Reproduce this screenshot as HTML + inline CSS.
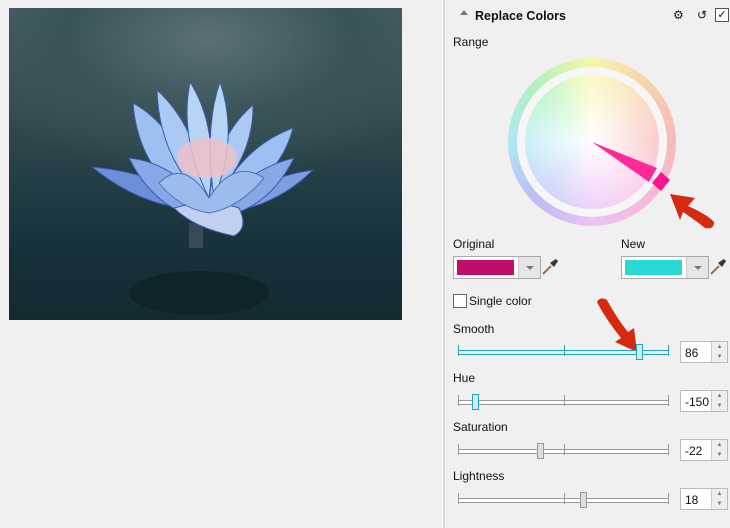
<!DOCTYPE html><html><head><style>
body{margin:0;width:730px;height:528px;background:#f0f0f0;font-family:"Liberation Sans",sans-serif;font-size:12px;color:#111;position:relative;overflow:hidden}
.a{position:absolute}
.img{left:9px;top:8px;width:393px;height:312px;background:radial-gradient(ellipse 260px 140px at 200px 30px,#5a7076 0%,#3a5359 55%,transparent 100%),linear-gradient(#4a6268 0%,#2a444a 45%,#17323a 75%,#132a30 100%)}
.div{left:442px;top:0;width:2px;height:528px;background:#d8d8d8;border-left:1px solid #fff}
.track{height:3px;border-top:1px solid #999;border-bottom:1px solid #999;background:#fff}
.tick{width:1px;height:11px;background:#999;top:-5px}
.thumb{width:5px;height:14px;border:1px solid #999;background:#ddd;top:-6px}
.spin{left:680px;width:48px;height:22px;background:#fff;border:1px solid #bbb;box-sizing:border-box}
.spin span{position:absolute;left:4px;top:4px}
.spin i{position:absolute;right:0;top:0;width:15px;height:20px;background:#eee;border-left:1px solid #ccc;font-style:normal;font-size:6px;color:#777;text-align:center;line-height:10px}
.sw{width:88px;height:23px;border:1px solid #aaa;background:#fff;box-sizing:border-box}
.sw b{position:absolute;left:3px;top:3px;width:57px;height:15px}
.sw i{position:absolute;right:0;top:0;width:21px;height:21px;background:#e6e6e6;border-left:1px solid #ccc}
.sw i:after{content:"";position:absolute;left:7px;top:9px;border:4px solid transparent;border-top:4px solid #777}
</style></head><body>
<div class="a img">
<svg width="393" height="312" style="position:absolute;left:0;top:0">
<ellipse cx="190" cy="285" rx="70" ry="22" fill="#0c1e22" opacity=".6"/>
<rect x="180" y="215" width="14" height="25" fill="#3a4858"/>
<g stroke="#3a5ab0" stroke-width="1">
<path d="M83 159 Q150 165 200 200 Q140 205 83 159Z" fill="#6d8fd8"/>
<path d="M304 162 Q250 170 200 205 Q260 205 304 162Z" fill="#7c9ee0"/>
<path d="M124 95 Q170 120 195 200 Q130 170 124 95Z" fill="#9ec0f0"/>
<path d="M284 120 Q230 140 205 200 Q270 175 284 120Z" fill="#9ec0f0"/>
<path d="M148 82 Q190 120 198 195 Q150 150 148 82Z" fill="#aacaf4"/>
<path d="M244 97 Q205 130 200 195 Q245 150 244 97Z" fill="#aacaf4"/>
<path d="M181 74 Q210 120 200 190 Q170 130 181 74Z" fill="#b6d4f6"/>
<path d="M211 74 Q230 130 205 190 Q195 120 211 74Z" fill="#b6d4f6"/>
<path d="M120 150 Q170 155 205 210 Q150 210 120 150Z" fill="#86a8e6"/>
<path d="M285 150 Q240 160 195 210 Q255 210 285 150Z" fill="#86a8e6"/>
<path d="M165 200 Q200 190 230 200 Q240 220 225 228 Q185 220 165 200Z" fill="#c0d0ee"/>
</g>
<ellipse cx="198" cy="150" rx="30" ry="20" fill="#efc0c8" opacity=".85"/>
<path d="M150 175 Q175 150 200 190 Q225 150 255 170 Q230 200 200 205 Q170 200 150 175Z" fill="#9cbcee" stroke="#5070c0"/>
</svg></div>
<div class="a div"></div>
<div class="a" style="left:460px;top:10px;border:4px solid transparent;border-bottom:5px solid #777;border-top:0"></div>
<div class="a" style="left:475px;top:9px;font-weight:bold;font-size:12.5px">Replace Colors</div>
<div class="a" style="left:673px;top:8px;font-size:12px">⚙</div>
<div class="a" style="left:697px;top:8px;font-size:12px">↺</div>
<div class="a" style="left:715px;top:8px;width:12px;height:12px;border:1px solid #555;background:#fff;font-size:11px;line-height:12px;text-align:center">✓</div>
<div class="a" style="left:453px;top:35px">Range</div>
<div class="a" style="left:508px;top:58px;width:168px;height:168px;border-radius:50%;background:conic-gradient(from 0deg,hsl(60,80%,82%),hsl(30,80%,82%),hsl(0,80%,85%),hsl(330,80%,85%),hsl(290,75%,86%),hsl(240,75%,85%),hsl(190,75%,82%),hsl(130,70%,82%),hsl(60,80%,82%))"></div>
<div class="a" style="left:517px;top:67px;width:150px;height:150px;border-radius:50%;background:#f6f6f6"></div>
<div class="a" style="left:525px;top:75px;width:134px;height:134px;border-radius:50%;background:radial-gradient(circle,#fff 0%,rgba(255,255,255,.45) 65%,rgba(255,255,255,.1) 100%),conic-gradient(from 0deg,hsl(60,85%,78%),hsl(30,85%,80%),hsl(0,85%,82%),hsl(320,85%,84%),hsl(280,80%,84%),hsl(230,80%,82%),hsl(190,80%,80%),hsl(130,75%,78%),hsl(60,85%,78%))"></div>
<svg class="a" style="left:0;top:0" width="730" height="528">
<path d="M592 142 L657 168 L649 182Z" fill="#ff2a9a"/>
<path d="M652 183 L661 172 L670 180 L661 191Z" fill="#ff1190"/>
<path d="M670 194 L695 198 L688 206 Q708 215 714 222 Q714 230 705 228 Q695 220 683 212 L680 220Z" fill="#d62a10"/>
<path d="M597 302 Q600 296 607 300 Q618 320 628 332 L634 328 L637 352 L615 342 L621 338 Q605 318 597 302Z" fill="#d62a10"/>
</svg>
<div class="a" style="left:453px;top:237px">Original</div>
<div class="a" style="left:621px;top:237px">New</div>
<div class="a sw" style="left:453px;top:256px"><b style="background:#c20c6a"></b><i></i></div>
<div class="a sw" style="left:621px;top:256px"><b style="background:#2ad8d4"></b><i></i></div>
<svg class="a" style="left:541px;top:258px" width="18" height="18"><path d="M2 16 L10 8" stroke="#b06a3a" stroke-width="2"/><path d="M9 5 L13 9 L17 3 L15 1Z" fill="#333"/></svg>
<svg class="a" style="left:709px;top:258px" width="18" height="18"><path d="M2 16 L10 8" stroke="#b06a3a" stroke-width="2"/><path d="M9 5 L13 9 L17 3 L15 1Z" fill="#333"/></svg>
<div class="a" style="left:453px;top:294px;width:12px;height:12px;border:1px solid #666;background:#fff"></div>
<div class="a" style="left:469px;top:294px">Single color</div>
<div class="a" style="left:453px;top:322px">Smooth</div>
<div class="a" style="left:453px;top:371px">Hue</div>
<div class="a" style="left:453px;top:420px">Saturation</div>
<div class="a" style="left:453px;top:469px">Lightness</div>
<div class="a" style="left:458px;top:350px;width:211px;"><div class="a track" style="left:0;width:211px;border-color:#2aa0c0;background:#d8f4fb"></div><div class="a tick" style="left:0;background:#2aa0c0"></div><div class="a tick" style="left:106px;background:#2aa0c0"></div><div class="a tick" style="left:210px;background:#2aa0c0"></div><div class="a thumb" style="left:178px;border-color:#2aa0c0;background:#c8f0fa"></div></div>
<div class="a" style="left:458px;top:400px"><div class="a track" style="left:0;width:211px"></div><div class="a tick" style="left:0"></div><div class="a tick" style="left:106px"></div><div class="a tick" style="left:210px"></div><div class="a thumb" style="left:14px;border-color:#2aa0c0;background:#c8f0fa"></div></div>
<div class="a" style="left:458px;top:449px"><div class="a track" style="left:0;width:211px"></div><div class="a tick" style="left:0"></div><div class="a tick" style="left:106px"></div><div class="a tick" style="left:210px"></div><div class="a thumb" style="left:79px"></div></div>
<div class="a" style="left:458px;top:498px"><div class="a track" style="left:0;width:211px"></div><div class="a tick" style="left:0"></div><div class="a tick" style="left:106px"></div><div class="a tick" style="left:210px"></div><div class="a thumb" style="left:122px"></div></div>
<div class="a spin" style="top:341px"><span>86</span><i>▲<br>▼</i></div>
<div class="a spin" style="top:390px"><span>-150</span><i>▲<br>▼</i></div>
<div class="a spin" style="top:439px"><span>-22</span><i>▲<br>▼</i></div>
<div class="a spin" style="top:488px"><span>18</span><i>▲<br>▼</i></div>
</body></html>
